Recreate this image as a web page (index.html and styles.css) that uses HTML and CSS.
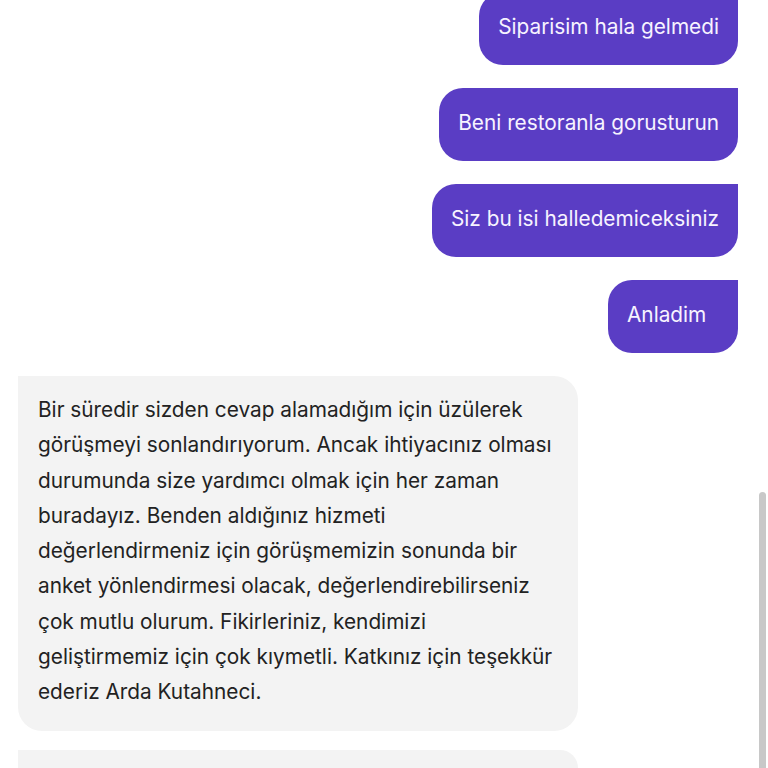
FILE: index.html
```html
<!DOCTYPE html>
<html lang="tr">
<head>
<meta charset="utf-8">
<link rel="stylesheet" href="styles.css">
</head>
<body>
<div class="chat">
  <div class="msg out">Siparisim hala gelmedi</div>
  <div class="msg out">Beni restoranla gorusturun</div>
  <div class="msg out">Siz bu isi halledemiceksiniz</div>
  <div class="msg out">Anladim</div>
  <div class="msg in">Bir süredir sizden cevap alamadığım için üzülerek<br>görüşmeyi sonlandırıyorum. Ancak ihtiyacınız olması<br>durumunda size yardımcı olmak için her zaman<br>buradayız. Benden aldığınız hizmeti<br>değerlendirmeniz için görüşmemizin sonunda bir<br>anket yönlendirmesi olacak, değerlendirebilirseniz<br>çok mutlu olurum. Fikirleriniz, kendimizi<br>geliştirmemiz için çok kıymetli. Katkınız için teşekkür<br>ederiz Arda Kutahneci.</div>
  <div class="msg in next"></div>
</div>
<div class="scrollbar"></div>
</body>
</html>
```
FILE: styles.css
```css
html, body {
  margin: 0;
  padding: 0;
  background: #ffffff;
  overflow: hidden;
  height: 768px;
}
body {
  font-family: Inter, "Open Sans", sans-serif;
  position: relative;
}
.chat {
  display: flex;
  flex-direction: column;
  gap: 23px;
  margin-top: -8px;
  padding: 0 30px 0 18px;
}
.msg {
  font-size: 20.8px;
  box-sizing: border-box;
}
.out {
  align-self: flex-end;
  min-width: 130px;
  background: #5a3dc4;
  color: #f7f3ff;
  line-height: 25px;
  padding: 22px 19px 26px 19px;
  border-radius: 24px 0 24px 24px;
}
.in {
  align-self: flex-start;
  width: 560px;
  background: #f3f3f3;
  color: #222222;
  line-height: 35.3px;
  padding: 16px 8px 21px 20px;
  border-radius: 0 24px 24px 24px;
}
.next {
  height: 18px;
  margin-top: -4px;
  padding: 0;
  border-radius: 0 24px 0 0;
}
.scrollbar {
  position: absolute;
  left: 759px;
  top: 492px;
  width: 7px;
  height: 276px;
  background: #c8c8c8;
  border-radius: 4px 4px 0 0;
}
```
